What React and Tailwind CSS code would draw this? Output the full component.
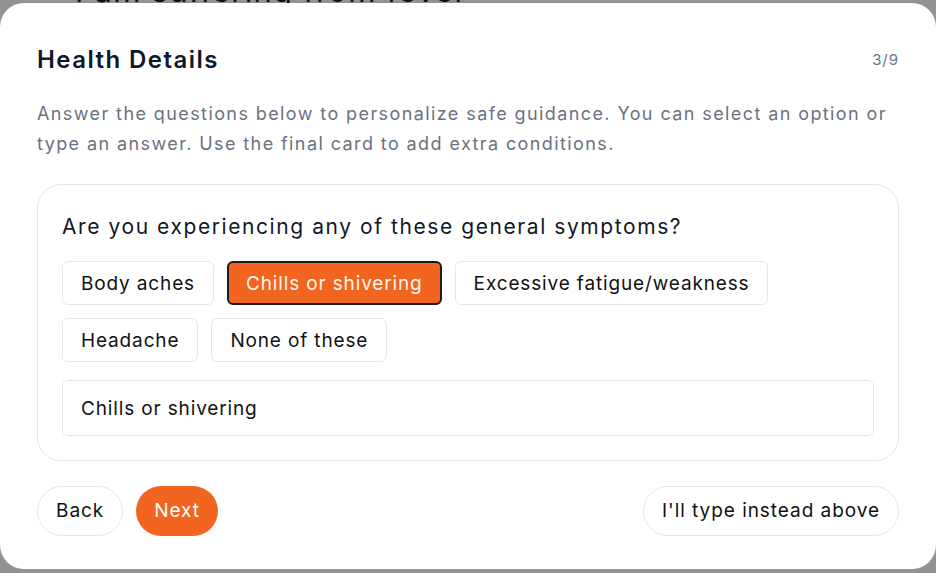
import { useState } from 'react';

const options = [
  'Body aches',
  'Chills or shivering',
  'Excessive fatigue/weakness',
  'Headache',
  'None of these',
];

const App = () => {
  const [selected, setSelected] = useState('Chills or shivering');
  const [answer, setAnswer] = useState('Chills or shivering');

  return (
    <div className="flex h-[573px] w-[936px] flex-col overflow-hidden bg-[#929292] font-['Inter',sans-serif] tracking-[0.06em]">
      {/* chat text behind the sheet */}
      <div className="flex h-[3px] flex-col justify-end">
        <div className="-mb-[4px] whitespace-nowrap pl-[75px] text-[31px] leading-[32px] tracking-[0.04em] text-[#111]">
          I am suffering from fever
        </div>
      </div>

      <div className="relative flex h-[566px] w-[936px] shrink-0 flex-col rounded-[24px] bg-white px-[37px] pt-[41px]">
        <div className="flex items-center justify-between">
          <h2 className="text-[24px] font-semibold leading-[32px] tracking-[0.06em] text-[#0f172a]">
            Health Details
          </h2>
          <span className="text-[15px] text-[#64748b]">3/9</span>
        </div>

        <p className="mt-[23px] text-[18px] leading-[30px] tracking-[0.078em] text-[#6b7280]">
          Answer the questions below to personalize safe guidance. You can select an option or
          type an answer. Use the final card to add extra conditions.
        </p>

        <div className="mt-[25px] rounded-[24px] border border-[#e5e7eb] px-[24px] pb-[24px] pt-[28px]">
          <h3 className="text-[21px] font-normal leading-[28px] tracking-[0.075em] text-[#111827]">
            Are you experiencing any of these general symptoms?
          </h3>
          <div className="mt-[20px] flex flex-wrap gap-[13px]">
            {options.map((opt) => (
              <button
                key={opt}
                type="button"
                onClick={() => {
                  setSelected(opt);
                  setAnswer(opt);
                }}
                className={`h-[44px] rounded-[6px] text-[19px] leading-none tracking-[0.045em] ${
                  selected === opt
                    ? 'border-2 border-[#1c1c1c] bg-[#f26520] px-[17px] text-[#fff7ee]'
                    : 'border border-[#e5e7eb] bg-white px-[18px] text-[#111]'
                }`}
              >
                {opt}
              </button>
            ))}
          </div>
          <input
            value={answer}
            onChange={(e) => setAnswer(e.target.value)}
            className="mt-[18px] h-[56px] w-full rounded-[6px] border border-[#e5e7eb] px-[18px] text-[19px] tracking-[0.045em] text-[#111] outline-none"
          />
        </div>

        <div className="mt-[25px] flex items-center justify-between">
          <div className="flex gap-[13px]">
            <button
              type="button"
              className="h-[50px] rounded-full border border-[#e5e7eb] px-[18px] text-[19px] tracking-[0.05em] text-[#111]"
            >
              Back
            </button>
            <button
              type="button"
              className="h-[50px] rounded-full bg-[#f26520] px-[18px] text-[19px] tracking-[0.05em] text-white"
            >
              Next
            </button>
          </div>
          <button
            type="button"
            className="h-[50px] rounded-full border border-[#e5e7eb] px-[18px] text-[19px] tracking-[0.05em] text-[#111]"
          >
            I'll type instead above
          </button>
        </div>
      </div>
    </div>
  );
};

export default App;
